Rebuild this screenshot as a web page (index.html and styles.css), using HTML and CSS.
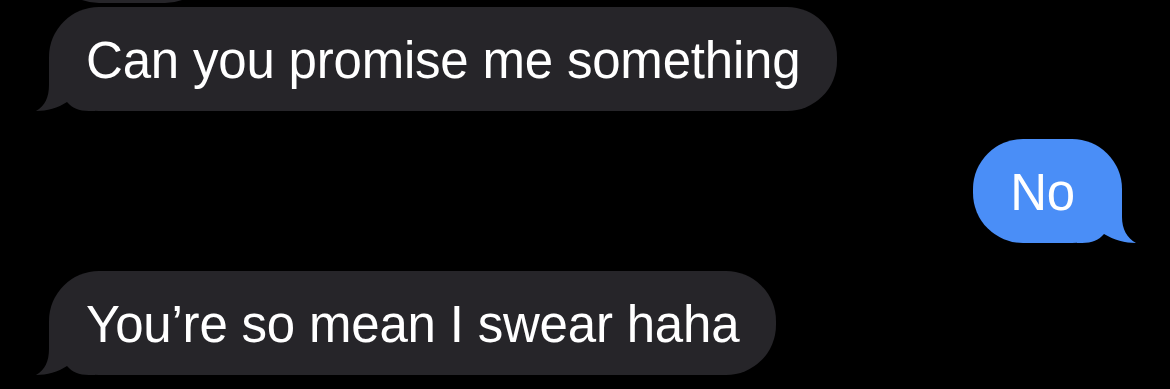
FILE: index.html
```html
<!DOCTYPE html>
<html lang="en">
<head>
    <meta charset="UTF-8">
    <title>Messages</title>
    <link rel="stylesheet" href="styles.css">
</head>
<body>
    <div class="thread">
        <div class="row row-in row-prev">
            <div class="bubble bubble-in bubble-prev"></div>
        </div>

        <div class="row row-in">
            <div class="bubble bubble-in">
                Can you promise me something
                <svg class="tail tail-in" viewBox="0 0 60 50" width="60" height="50">
                    <path d="M14 0 V24 C14 36 10 45 1 50 C12 50 23 47 32 41 C37 47 44 50 54 50 H60 V0 Z"/>
                </svg>
            </div>
        </div>

        <div class="row row-out">
            <div class="bubble bubble-out">
                No
                <svg class="tail tail-out" viewBox="0 0 60 50" width="60" height="50">
                    <path d="M45 0 V24 C45 36 50 45 59 50 C48 50 37 47 27 41 C22 47 15 50 5 50 H0 V0 Z"/>
                </svg>
            </div>
        </div>

        <div class="row row-in">
            <div class="bubble bubble-in">
                You’re so mean I swear haha
                <svg class="tail tail-in" viewBox="0 0 60 50" width="60" height="50">
                    <path d="M14 0 V24 C14 36 10 45 1 50 C12 50 23 47 32 41 C37 47 44 50 54 50 H60 V0 Z"/>
                </svg>
            </div>
        </div>
    </div>
</body>
</html>
```

FILE: styles.css
```css
html, body {
    background-color: #000;
}

body {
    margin: 0;
    padding: 0;
    font-family: "Liberation Sans", Arial, sans-serif;
    overflow: hidden;
}

.thread {
    display: flex;
    flex-direction: column;
    padding: 0 48px 0 49px;
}

.row {
    display: flex;
    margin-top: 28px;
}

.row-prev {
    margin-top: -101px;
}

.row-prev + .row {
    margin-top: 4px;
}

.row-in {
    justify-content: flex-start;
}

.row-out {
    justify-content: flex-end;
}

.bubble {
    position: relative;
    z-index: 0;
    font-size: 51px;
    line-height: 62px;
    letter-spacing: -0.2px;
    color: #fff;
    padding: 23px 37px 19px 37px;
    border-radius: 50px;
    white-space: nowrap;
}

.bubble-in {
    background-color: #262529;
}

.bubble-in .tail {
    fill: #262529;
}

.bubble-prev {
    width: 166px;
    height: 62px;
    padding: 23px 0 19px 0;
}

.bubble-out {
    background-color: #4a8ef7;
    padding-right: 47px;
    padding-left: 37px;
}

.bubble-out .tail {
    fill: #4a8ef7;
}

.tail {
    position: absolute;
    bottom: 0;
    z-index: -1;
    display: block;
}

.tail-in {
    left: -14px;
}

.tail-out {
    right: -15px;
}
```
